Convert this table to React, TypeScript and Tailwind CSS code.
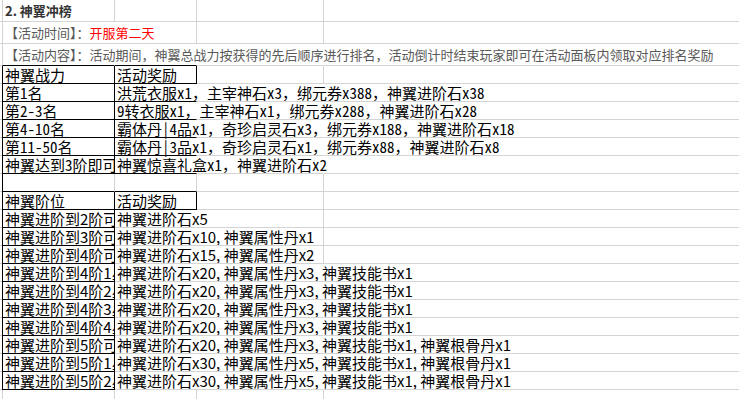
import React from 'react';

// border presets, one per cell kind (left/right/bottom colours)
const aGray = 'border-l-[#d4d4d4] border-r-[#d4d4d4] border-b-[#d4d4d4]';
const aOpen = 'border-l-[#d4d4d4] border-r-transparent border-b-[#d4d4d4]';
const aOpenUnder = 'border-l-[#d4d4d4] border-r-transparent border-b-black';
const aBox = 'border-l-black border-r-black border-b-black';
const aGap = 'border-l-black border-r-[#d4d4d4] border-b-black';

const bGray = 'border-r-[#d4d4d4] border-b-[#d4d4d4]';
const bOpen = 'border-r-transparent border-b-[#d4d4d4]';
const bBox = 'border-r-black border-b-black';
const bUnder = 'border-r-transparent border-b-black';
const bGapUnder = 'border-r-[#d4d4d4] border-b-black';

const cGray = 'border-r-[#d4d4d4] border-b-[#d4d4d4]';
const cOpen = 'border-r-transparent border-b-[#d4d4d4]';

const topText =
  'flex h-full items-center whitespace-nowrap pl-[2px] text-[13px] leading-none text-[#595959] font-["Noto_Sans_CJK_SC",sans-serif]';
const monoText =
  'flex h-full items-center whitespace-nowrap pl-[2px] pb-[1px] text-[15px] leading-none text-black font-["Noto_Sans_Mono_CJK_SC","Noto_Sans_CJK_SC",sans-serif]';
const propText =
  'flex h-full items-center whitespace-nowrap pl-[2px] pb-[1px] text-[15px] leading-none text-black font-["Noto_Sans_CJK_SC",sans-serif]';

interface RowProps {
  tall?: boolean;
  mono?: boolean;
  a?: React.ReactNode;
  b?: React.ReactNode;
  aBorder: string;
  bBorder: string;
  cBorder: string;
  clipA?: boolean;
}

const Row = ({ tall, mono, a, b, aBorder, bBorder, cBorder, clipA }: RowProps) => {
  const text = tall ? topText : mono ? monoText : propText;

  return (
    <div className={tall ? 'flex h-[22px]' : 'flex h-[18px]'}>
      <div className="w-[2px] shrink-0 border-b border-b-[#d4d4d4]" />
      <div className={`w-[113px] shrink-0 border-l border-r border-b ${aBorder} ${clipA ? 'overflow-hidden' : ''}`}>
        {a && <div className={text}>{a}</div>}
      </div>
      <div className={`w-[82px] shrink-0 border-r border-b ${bBorder}`}>
        {b && <div className={text}>{b}</div>}
      </div>
      <div className={`w-[127px] shrink-0 border-r border-b ${cBorder}`} />
      <div className="flex-1 border-b border-b-[#d4d4d4]" />
    </div>
  );
};

const rankRows = [
  ['第1名', '洪荒衣服x1，主宰神石x3，绑元券x388，神翼进阶石x38'],
  ['第2-3名', '9转衣服x1，主宰神石x1，绑元券x288，神翼进阶石x28'],
  ['第4-10名', '霸体丹|4品x1，奇珍启灵石x3，绑元券x188，神翼进阶石x18'],
  ['第11-50名', '霸体丹|3品x1，奇珍启灵石x1，绑元券x88，神翼进阶石x8'],
  ['神翼达到3阶即可领取', '神翼惊喜礼盒x1，神翼进阶石x2'],
];

// third value: whether the reward text stays inside column C
const stageRows: [string, string, boolean][] = [
  ['神翼进阶到2阶可领取', '神翼进阶石x5', true],
  ['神翼进阶到3阶可领取', '神翼进阶石x10, 神翼属性丹x1', true],
  ['神翼进阶到4阶可领取', '神翼进阶石x15, 神翼属性丹x2', true],
  ['神翼进阶到4阶1星可领取', '神翼进阶石x20, 神翼属性丹x3, 神翼技能书x1', false],
  ['神翼进阶到4阶2星可领取', '神翼进阶石x20, 神翼属性丹x3, 神翼技能书x1', false],
  ['神翼进阶到4阶3星可领取', '神翼进阶石x20, 神翼属性丹x3, 神翼技能书x1', false],
  ['神翼进阶到4阶4星可领取', '神翼进阶石x20, 神翼属性丹x3, 神翼技能书x1', false],
  ['神翼进阶到5阶可领取', '神翼进阶石x20, 神翼属性丹x3, 神翼技能书x1, 神翼根骨丹x1', false],
  ['神翼进阶到5阶1星可领取', '神翼进阶石x30, 神翼属性丹x5, 神翼技能书x1, 神翼根骨丹x1', false],
  ['神翼进阶到5阶2星可领取', '神翼进阶石x30, 神翼属性丹x5, 神翼技能书x1, 神翼根骨丹x1', false],
];

export default function App() {
  return (
    <div className="h-[399px] w-[739px] overflow-hidden bg-white">
      <Row
        tall
        a={<span className="font-bold text-[#333]">2. 神翼冲榜</span>}
        aBorder={aGray}
        bBorder={bGray}
        cBorder={cGray}
      />
      <Row
        tall
        a={
          <>
            【活动时间】：<span className="text-[#ff0000]">开服第二天</span>
          </>
        }
        aBorder={aOpen}
        bBorder={bGray}
        cBorder={cGray}
      />
      <Row
        tall
        a="【活动内容】：活动期间，神翼总战力按获得的先后顺序进行排名，活动倒计时结束玩家即可在活动面板内领取对应排名奖励"
        aBorder={aOpenUnder}
        bBorder={bUnder}
        cBorder={cOpen}
      />

      {/* 战力排名 */}
      <Row mono a="神翼战力" b="活动奖励" aBorder={aBox} bBorder={bBox} cBorder={cGray} clipA />
      {rankRows.map(([rank, reward]) => (
        <Row key={rank} mono a={rank} b={reward} aBorder={aBox} bBorder={bUnder} cBorder={cOpen} clipA />
      ))}
      <Row aBorder={aGap} bBorder={bGapUnder} cBorder={cGray} />

      {/* 阶位奖励 */}
      <Row a="神翼阶位" b="活动奖励" aBorder={aBox} bBorder={bBox} cBorder={cGray} clipA />
      {stageRows.map(([stage, reward, short]) => (
        <Row
          key={stage}
          a={stage}
          b={reward}
          aBorder={aBox}
          bBorder={bOpen}
          cBorder={short ? cGray : cOpen}
          clipA
        />
      ))}
      <Row aBorder={aGray} bBorder={bGray} cBorder={cGray} />
    </div>
  );
}
